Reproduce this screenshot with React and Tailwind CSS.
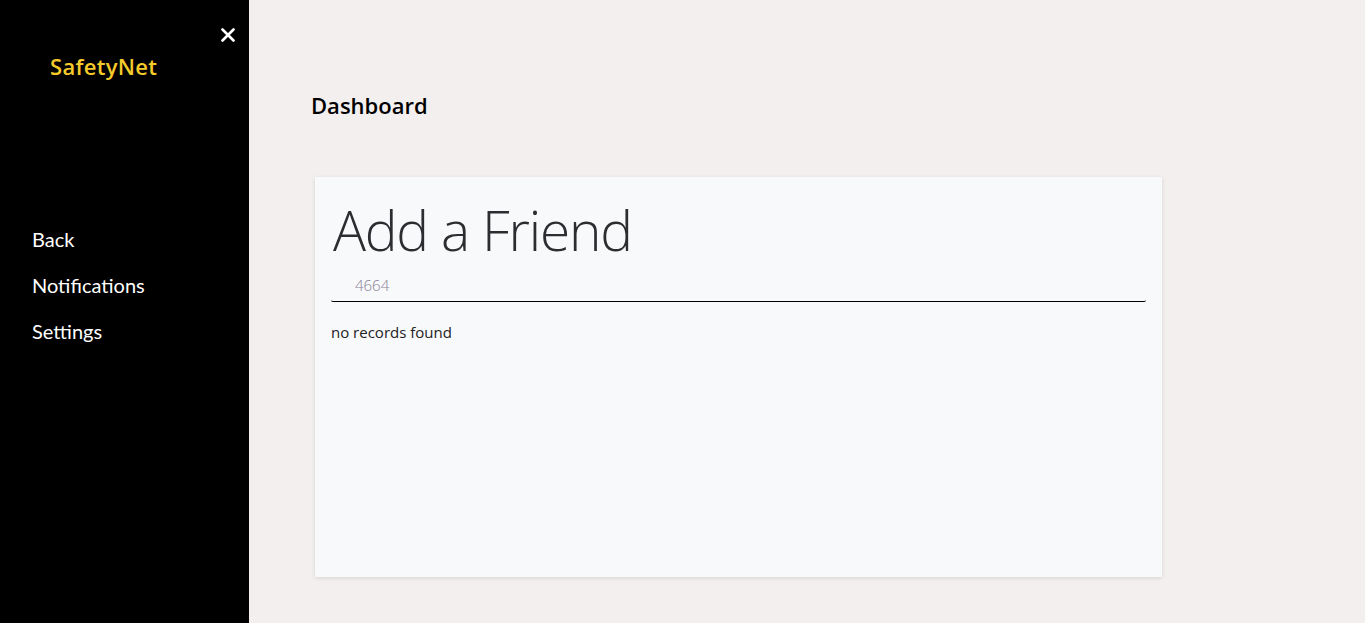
import React from "react";

export default function App() {
  return (
    <div className="flex w-full h-[623px] bg-[#f3efee]" style={{ fontFamily: '"Open Sans", "Noto Sans", sans-serif' }}>
      <aside className="w-[249px] shrink-0 bg-black flex flex-col">
        <div className="relative h-[201px]">
          <button className="absolute left-[219px] top-[26px] w-[18px] h-[18px] flex items-center justify-center">
            <svg width="14" height="14" viewBox="0 0 14 14">
              <path d="M1.5 1.5 L12.5 12.5 M12.5 1.5 L1.5 12.5" stroke="white" strokeWidth="2.6" strokeLinecap="round" />
            </svg>
          </button>
          <div className="absolute left-[50px] top-[50px] text-[22px] font-semibold text-[#f5cb2b] tracking-[0.3px]">SafetyNet</div>
        </div>
        <nav className="flex flex-col pl-[32px] pt-[24px] gap-[17px] text-white text-[20px]" style={{ fontFamily: '"Lato", "Noto Sans", sans-serif' }}>
          <a className="leading-[29px]">Back</a>
          <a className="leading-[29px]">Notifications</a>
          <a className="leading-[29px]">Settings</a>
        </nav>
      </aside>
      <main className="flex-1 pl-[62px] pt-[90px]">
        <h1 className="text-[22px] font-semibold text-black leading-[30px]">Dashboard</h1>
        <div className="mt-[57px] ml-[4px] w-[847px] h-[400px] bg-[#f8f9fa] shadow-[0_1px_4px_rgba(0,0,0,0.12)] px-[16px] pt-[18px]">
          <h2 className="text-[55px] font-light text-[#2b2d30] leading-[70px] tracking-[-1.2px] pl-[2px]">Add a Friend</h2>
          <div className="mt-[11px] border-b border-black rounded-b-[2px] h-[26px] pl-[24px] text-[15px] font-light text-[#8a7f96] leading-[18px]">4664</div>
          <p className="mt-[20px] text-[15px] text-[#222] leading-[20px]">no records found</p>
        </div>
      </main>
    </div>
  );
}
